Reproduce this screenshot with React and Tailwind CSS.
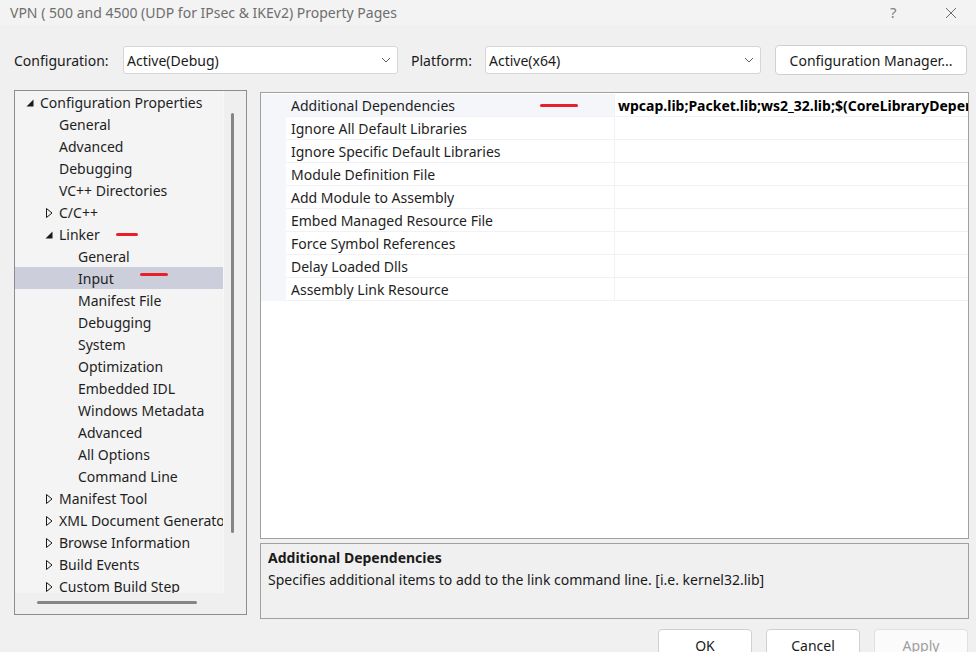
import React from "react";

const F = { fontFamily: '"Noto Sans", "Open Sans", sans-serif' };

const tree = [
  { t: "Configuration Properties", l: 0, s: "open" },
  { t: "General", l: 1 },
  { t: "Advanced", l: 1 },
  { t: "Debugging", l: 1 },
  { t: "VC++ Directories", l: 1 },
  { t: "C/C++", l: 1, s: "closed" },
  { t: "Linker", l: 1, s: "open", mark: 101 },
  { t: "General", l: 2 },
  { t: "Input", l: 2, sel: true, mark: 125, markUp: true },
  { t: "Manifest File", l: 2 },
  { t: "Debugging", l: 2 },
  { t: "System", l: 2 },
  { t: "Optimization", l: 2 },
  { t: "Embedded IDL", l: 2 },
  { t: "Windows Metadata", l: 2 },
  { t: "Advanced", l: 2 },
  { t: "All Options", l: 2 },
  { t: "Command Line", l: 2 },
  { t: "Manifest Tool", l: 1, s: "closed" },
  { t: "XML Document Generator", l: 1, s: "closed" },
  { t: "Browse Information", l: 1, s: "closed" },
  { t: "Build Events", l: 1, s: "closed" },
  { t: "Custom Build Step", l: 1, s: "closed" },
  { t: "Code Analysis", l: 1, s: "closed" },
];

const rows = [
  "Additional Dependencies",
  "Ignore All Default Libraries",
  "Ignore Specific Default Libraries",
  "Module Definition File",
  "Add Module to Assembly",
  "Embed Managed Resource File",
  "Force Symbol References",
  "Delay Loaded Dlls",
  "Assembly Link Resource",
];

function Tri({ s }) {
  if (s === "open")
    return (
      <svg width="8" height="8" viewBox="0 0 8 8" className="ml-[5px]">
        <polygon points="7.5,0.5 7.5,7.5 0.5,7.5" fill="#1a1a1a" />
      </svg>
    );
  if (s === "closed")
    return (
      <svg width="7" height="10" viewBox="0 0 7 10" className="ml-[6px]">
        <polygon points="0.5,0.5 6,5 0.5,9.5" fill="none" stroke="#1a1a1a" strokeWidth="1" />
      </svg>
    );
  return null;
}

function Chevron() {
  return (
    <svg width="10" height="6" viewBox="0 0 10 6">
      <polyline points="1,1 5,5 9,1" fill="none" stroke="#606060" strokeWidth="1" />
    </svg>
  );
}

function Combo({ text, w }) {
  return (
    <div
      className="h-[28px] bg-white border border-[#d6d6d6] rounded-[3px] flex items-center pl-[3px] pr-[6px] justify-between"
      style={{ width: w }}
    >
      <span className="text-[14px] text-[#1a1a1a]">{text}</span>
      <Chevron />
    </div>
  );
}

function Btn({ children, disabled }) {
  return (
    <div
      className={
        "w-[94px] h-[32px] rounded-[4px] border flex items-center justify-center text-[14px] " +
        (disabled ? "border-[#e0e0e0] text-[#a0a0a0] bg-[#fbfbfb]" : "bg-white border-[#d0d0d0] text-[#1a1a1a]")
      }
    >
      {children}
    </div>
  );
}

export default function App() {
  return (
    <div className="w-[976px] h-[652px] bg-[#f0f0f0] overflow-hidden relative" style={F}>
      {/* title bar */}
      <div className="h-[25px] bg-[#f3f3f3] flex items-center pl-[10px] text-[14px] text-[#6e6e6e]">
        <span className="flex-1">VPN ( 500 and 4500 (UDP for IPsec &amp; IKEv2) Property Pages</span>
        <span className="w-[12px] text-[15px] mr-[43px] text-[#808080]">?</span>
        <svg width="12" height="12" viewBox="0 0 12 12" className="mr-[19px]">
          <path d="M1 1 L11 11 M11 1 L1 11" stroke="#6e6e6e" strokeWidth="1" />
        </svg>
      </div>

      {/* config row */}
      <div className="mt-[20px] h-[29px] flex items-center pl-[14px] pt-[1px] text-[14px] text-[#1a1a1a]">
        <span className="w-[109px]">Configuration:</span>
        <Combo text="Active(Debug)" w={275} />
        <span className="ml-[13px] w-[74px]">Platform:</span>
        <Combo text="Active(x64)" w={276} />
        <div className="ml-[14px] w-[192px] h-[30px] bg-white border border-[#d0d0d0] rounded-[4px] flex items-center justify-center">
          Configuration Manager...
        </div>
      </div>

      {/* main */}
      <div className="mt-[16px] flex items-start">
        {/* tree */}
        <div className="ml-[14px] w-[233px] h-[525px] border border-[#8c8c94] grid grid-cols-[209px_22px] grid-rows-[502px_21px] bg-[#efefef]">
          <div className="bg-[#f4f4f4] overflow-hidden border-r border-[#f8f8f8]">
            {tree.map((r, i) => (
              <div
                key={i}
                className={
                  "relative h-[22px] flex items-center whitespace-nowrap pt-[1px] text-[14px] text-[#1e1e1e] " +
                  (r.sel ? "bg-[#cccedb]" : "")
                }
                style={{ paddingLeft: 6 + r.l * 19 }}
              >
                <div className="w-[19px] shrink-0 flex items-center">
                  <Tri s={r.s} />
                </div>
                <span className="shrink-0">{r.t}</span>
                {r.mark && (
                  <span
                    className="absolute h-[3px] rounded-full bg-[#e8202a]"
                    style={{ left: r.mark, top: r.markUp ? 6 : 10, width: r.markUp ? 28 : 22 }}
                  />
                )}
              </div>
            ))}
          </div>
          <div className="relative">
            <div className="absolute left-[7px] top-[22px] w-[3px] h-[420px] rounded-full bg-[#858585]" />
          </div>
          <div className="relative">
            <div className="absolute left-[22px] top-[8px] h-[3px] w-[160px] rounded-full bg-[#858585]" />
          </div>
          <div />
        </div>

        {/* right column */}
        <div className="ml-[13px] mt-[2px] w-[709px] flex flex-col">
          <div className="h-[447px] bg-white border border-[#a0a0a0] flex flex-col pt-[1px]">
            {rows.map((r, i) => (
              <div key={i} className="h-[23px] flex">
                <div className="w-[25px] bg-[#f4f6fa]" />
                <div
                  className={
                    "relative w-[328px] flex items-center pl-[5px] text-[14px] text-[#1e1e1e] border-b border-[#f0f2f5] " +
                    (i === 0 ? "bg-[#f4f6fa]" : "bg-white")
                  }
                >
                  {r}
                  {i === 0 && (
                    <span className="absolute left-[254px] top-[10px] h-[3px] w-[38px] rounded-full bg-[#e8202a]" />
                  )}
                </div>
                <div className="flex-1 border-l border-b border-[#f0f2f5] flex items-center pl-[3px] overflow-hidden whitespace-nowrap text-[14px] font-bold text-black">
                  {i === 0 ? "wpcap.lib;Packet.lib;ws2_32.lib;$(CoreLibraryDependencies);%(AdditionalDependencies)" : ""}
                </div>
              </div>
            ))}
          </div>
          <div className="mt-[4px] h-[76px] border border-[#a0a0a0] bg-[#f0f0f0] pl-[7px] pt-[3px] text-[14px] text-[#1a1a1a]">
            <div className="font-bold leading-[22px]">Additional Dependencies</div>
            <div className="leading-[22px]">Specifies additional items to add to the link command line. [i.e. kernel32.lib]</div>
          </div>
        </div>
      </div>

      {/* buttons */}
      <div className="mt-[10px] flex justify-end gap-[14px] pr-[8px]">
        <Btn>OK</Btn>
        <Btn>Cancel</Btn>
        <Btn disabled>Apply</Btn>
      </div>
    </div>
  );
}
